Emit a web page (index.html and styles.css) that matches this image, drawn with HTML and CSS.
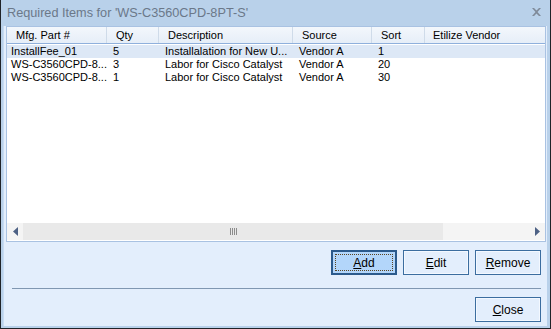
FILE: index.html
```html
<!DOCTYPE html>
<html>
<head>
<meta charset="utf-8">
<link rel="stylesheet" href="styles.css">
</head>
<body>
<div class="window">
  <div class="titlebar">
    <span class="title">Required Items for 'WS-C3560CPD-8PT-S'</span>
    <svg class="close" width="9" height="8" viewBox="0 0 9 8"><path d="M0 0h2l2.5 2.5L7 0h2L5.5 4 9 8H7L4.5 5.5 2 8H0l3.5-4z" fill="#7f8a99"/></svg>
  </div>
  <div class="client">
    <div class="listview">
      <div class="header">
        <div class="hcell c1">Mfg. Part #</div>
        <div class="hcell c2">Qty</div>
        <div class="hcell c3">Description</div>
        <div class="hcell c4">Source</div>
        <div class="hcell c5">Sort</div>
        <div class="hcell c6">Etilize Vendor</div>
      </div>
      <div class="rows">
        <div class="row selected">
          <div class="cell c1 first">InstallFee_01</div>
          <div class="cell c2">5</div>
          <div class="cell c3">Installalation for New U...</div>
          <div class="cell c4">Vendor A</div>
          <div class="cell c5">1</div>
          <div class="cell c6"></div>
        </div>
        <div class="row">
          <div class="cell c1 first">WS-C3560CPD-8...</div>
          <div class="cell c2">3</div>
          <div class="cell c3">Labor for Cisco Catalyst</div>
          <div class="cell c4">Vendor A</div>
          <div class="cell c5">20</div>
          <div class="cell c6"></div>
        </div>
        <div class="row">
          <div class="cell c1 first">WS-C3560CPD-8...</div>
          <div class="cell c2">1</div>
          <div class="cell c3">Labor for Cisco Catalyst</div>
          <div class="cell c4">Vendor A</div>
          <div class="cell c5">30</div>
          <div class="cell c6"></div>
        </div>
      </div>
      <div class="hscroll">
        <div class="sbtn"><svg width="5" height="9" viewBox="0 0 5 9"><path d="M5 0v9L0 4.5z" fill="#4d6185"/></svg></div>
        <div class="thumb"><span class="grip"></span></div>
        <div class="track"></div>
        <div class="sbtn"><svg width="5" height="9" viewBox="0 0 5 9"><path d="M0 0v9l5-4.5z" fill="#4d6185"/></svg></div>
      </div>
    </div>
    <div class="actions">
      <button class="btn default"><span class="focus"><u>A</u>dd</span></button>
      <button class="btn"><u>E</u>dit</button>
      <button class="btn"><u>R</u>emove</button>
    </div>
    <div class="sep"></div>
    <div class="footer">
      <button class="btn"><u>C</u>lose</button>
    </div>
  </div>
</div>
</body>
</html>
```
FILE: styles.css
```css
html, body {
  margin: 0;
  padding: 0;
  background: #ffffff;
}
body {
  width: 551px;
  height: 329px;
  overflow: hidden;
  font-family: "Liberation Sans", Arial, sans-serif;
  font-size: 11px;
  color: #000;
}
.window {
  width: 551px;
  height: 329px;
  box-sizing: border-box;
  border-left: 1px solid #1f2328;
  border-right: 1px solid #1f2328;
  border-bottom: 1px solid #1f2328;
  background: #b9d1ea;
  display: flex;
  flex-direction: column;
}
.titlebar {
  height: 25px;
  flex: none;
  display: flex;
  align-items: center;
  justify-content: space-between;
  padding: 0 9px 1px 6px;
}
.title {
  font-size: 12.7px;
  color: #6b7889;
}
.close {
  display: block;
  margin-top: -1px;
}
.client {
  flex: 1;
  background: #e3eefc;
  margin: 0 3px 2px 2px;
  border-left: 1px solid #c8dcf3;
  padding: 0 1px 0 2px;
  display: flex;
  flex-direction: column;
}
.listview {
  height: 216px;
  box-sizing: border-box;
  border: 1px solid #a9c2e2;
  background: #ffffff;
  display: flex;
  flex-direction: column;
}
.header {
  height: 17px;
  display: flex;
  background: linear-gradient(#f3f7fc, #e6eef8);
  border-bottom: 1px solid #8fb0dc;
  box-sizing: border-box;
  flex: none;
}
.hcell {
  box-sizing: border-box;
  padding-left: 9px;
  line-height: 16px;
  border-right: 1px solid #cfdbe9;
  white-space: nowrap;
  overflow: hidden;
}
.c1 { width: 100px; }
.c2 { width: 52px; }
.c3 { width: 134px; }
.c4 { width: 79px; }
.c5 { width: 53px; }
.c6 { flex: 1; border-right: none; }
.hcell.c6 { padding-left: 8px; }
.rows {
  flex: 1;
  padding-top: 1px;
}
.row {
  height: 13px;
  display: flex;
}
.row.selected {
  background: #dde8f6;
}
.cell {
  box-sizing: border-box;
  padding-left: 6px;
  line-height: 13px;
  white-space: nowrap;
  overflow: hidden;
}
.cell.first { padding-left: 4px; }
.hscroll {
  height: 17px;
  flex: none;
  display: flex;
  background: #f4f4f4;
  margin-bottom: 1px;
}
.sbtn {
  width: 16px;
  display: flex;
  align-items: center;
  justify-content: center;
  background: #f4f4f4;
}
.thumb {
  width: 420px;
  background: #e9e9e9;
  display: flex;
  align-items: center;
  justify-content: center;
}
.grip {
  width: 7px;
  height: 7px;
  background: repeating-linear-gradient(90deg, #8c8c8c 0 1px, transparent 1px 2px);
}
.track {
  flex: 1;
}
.actions {
  display: flex;
  justify-content: flex-end;
  gap: 6px;
  margin-top: 8px;
  padding-right: 5px;
}
.btn {
  width: 66px;
  height: 25px;
  box-sizing: border-box;
  border: 1px solid #3b6d9f;
  box-shadow: inset 0 0 0 1px #f3f8ff;
  background: #e3eefc;
  font-family: "Liberation Sans", Arial, sans-serif;
  font-size: 12px;
  color: #000;
  padding: 0;
  display: flex;
  align-items: center;
  justify-content: center;
}
.btn.default {
  border: 1px solid #2b5a8c;
  box-shadow: inset 0 0 0 1px #2b5a8c;
  background: #b3d6fa;
  padding: 3px;
}
.focus {
  flex: 1;
  align-self: stretch;
  display: flex;
  align-items: center;
  justify-content: center;
  border: 1px dotted #5a4420;
}
.sep {
  height: 1px;
  background: #8097b1;
  margin: 13px 5px 0 6px;
}
.footer {
  display: flex;
  justify-content: flex-end;
  margin-top: 8px;
  padding-right: 5px;
}
```
